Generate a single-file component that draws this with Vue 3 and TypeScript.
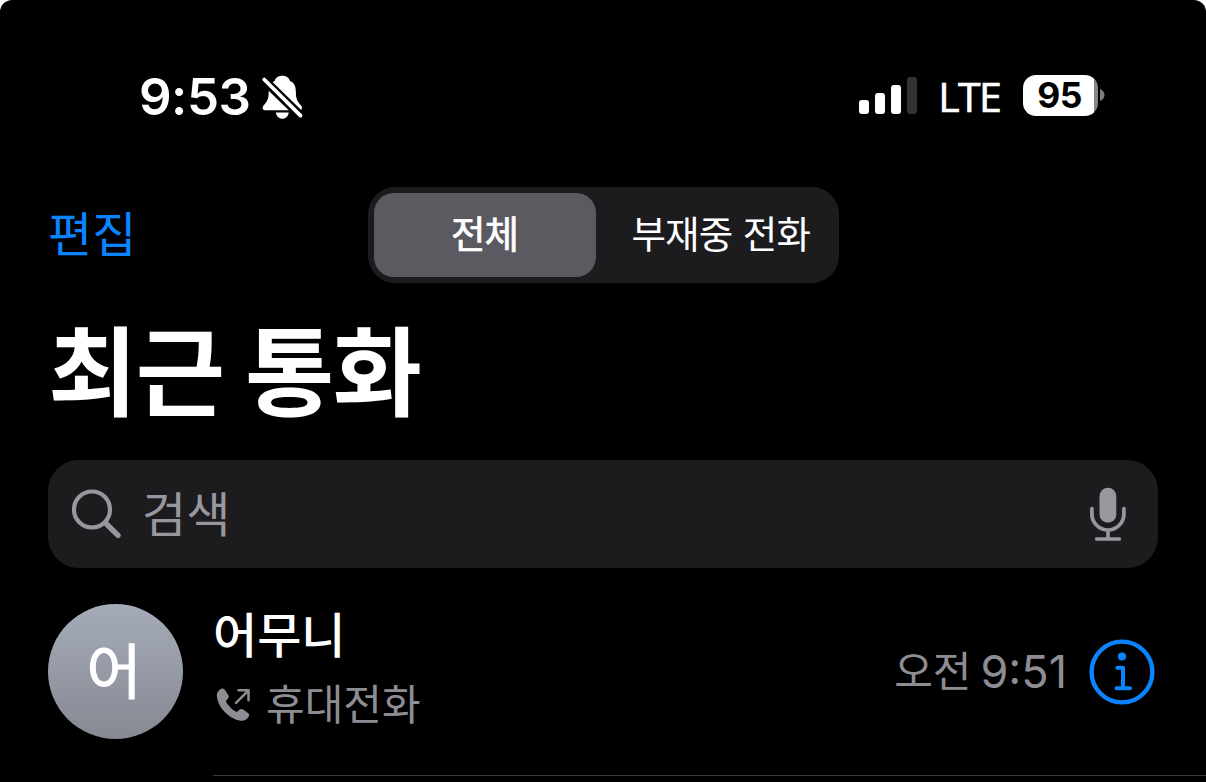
<script setup lang="ts">
import { ref } from 'vue'

interface Call {
  id: number
  name: string
  initial: string
  label: string
  period: string
  time: string
}

const tabs = ['전체', '부재중 전화']
const activeTab = ref(0)
const query = ref('')

const bars = [
  { level: 1, on: true },
  { level: 2, on: true },
  { level: 3, on: true },
  { level: 4, on: false },
]

const calls: Call[] = [
  { id: 1, name: '어무니', initial: '어', label: '휴대전화', period: '오전', time: '9:51' },
]
</script>

<template>
  <div class="screen">
    <header class="status-bar">
      <div class="status-left">
        <span class="clock">9:53</span>
        <svg class="bell" viewBox="0 0 44 46">
          <path d="M22.300 1.700c-4.200 0-6.800 2.200-7.600 5.200C9.800 8.700 8.700 13.200 8.700 18.700c0 7.300-2.300 9.300-5 12.600-1.900 2.500-1.300 5 1.800 5h33.600c3.100 0 3.700-2.500 1.800-5-2.700-3.300-5-5.300-5-12.600 0-5.500-1.100-10-6-11.800C29.100 3.900 26.500 1.700 22.300 1.700z" fill="#fff" />
          <path d="M15.800 38.500h13c-.6 3.800-3.200 6.300-6.500 6.300s-5.900-2.500-6.500-6.300z" fill="#fff" />
          <path d="M0 2 44 45" stroke="#000" stroke-width="8.800" />
          <path d="M4.200 5.500 40.500 41.600" stroke="#fff" stroke-width="3.800" stroke-linecap="round" />
        </svg>
      </div>
      <div class="status-right">
        <div class="signal">
          <i v-for="b in bars" :key="b.level" :class="['bar', 'bar-' + b.level, { off: !b.on }]"></i>
        </div>
        <span class="network">LTE</span>
        <div class="battery">
          <div class="battery-body"><span>95</span></div>
          <svg class="battery-cap" viewBox="0 0 5 14"><path d="M0 1C6 3 6 11 0 13z" fill="#7d7d7d" /></svg>
        </div>
      </div>
    </header>

    <nav class="nav-bar">
      <button class="edit">편집</button>
      <div class="segmented">
        <button
          v-for="(tab, i) in tabs"
          :key="tab"
          :class="['segment', { active: i === activeTab }]"
          @click="activeTab = i"
        >{{ tab }}</button>
      </div>
    </nav>

    <h1 class="title">최근 통화</h1>

    <label class="search">
      <svg class="search-icon" viewBox="0 0 50 50" fill="none" stroke="#98979f" stroke-linecap="round">
        <circle cx="20" cy="20.500" r="18" stroke-width="4.200" />
        <path d="M33.500 34 46 46.300" stroke-width="5.400" />
      </svg>
      <input v-model="query" type="text" placeholder="검색" />
      <svg class="mic-icon" viewBox="0 0 36 54" fill="none" stroke="#98979f" stroke-linecap="round">
        <rect x="9.500" y="0.800" width="16.800" height="35" rx="8.400" fill="#98979f" stroke="none" />
        <path d="M1.900 21.500v5.500a16 16 0 0 0 32 0v-5.500M18 43.500v8M6.700 52h22.600" stroke-width="3.700" />
      </svg>
    </label>

    <ul class="calls">
      <li v-for="call in calls" :key="call.id" class="call">
        <div class="avatar">{{ call.initial }}</div>
        <div class="call-body">
          <div class="call-info">
            <div class="name">{{ call.name }}</div>
            <div class="kind">
              <svg class="outgoing" viewBox="0 0 34 34">
                <path d="M5.400.8C2.500 2.200.6 4.600.9 8.600 1.900 19.500 13.500 31.500 24.500 32.700c4 .4 7-1.500 8.400-4.400.6-1.300.2-2.500-1-3.400l-4.700-3.300c-1.500-1-2.800-.9-4.100.3l-1.700 1.500c-.6.500-1.200.5-1.900.1-3-1.800-7.400-6.200-9.200-9.300-.4-.7-.4-1.200.1-1.800l1.500-1.700c1.100-1.300 1.200-2.600.2-4L8.800 1.800C7.900.6 6.700.2 5.400.8z" fill="#8e8d94" />
                <path d="M20 14.800 32 2.800M22.500 2.200h10v10" fill="none" stroke="#8e8d94" stroke-width="2.500" stroke-linecap="round" stroke-linejoin="round" />
              </svg>
              <span>{{ call.label }}</span>
            </div>
          </div>
          <div class="when">
            <span class="period">{{ call.period }}</span>
            <span class="time">{{ call.time }}</span>
          </div>
          <svg class="info" viewBox="0 0 66 66" fill="none" stroke="#0a84ff" stroke-linecap="round" stroke-linejoin="round">
            <circle cx="33" cy="33" r="30.400" stroke-width="4.400" />
            <circle cx="33" cy="17.500" r="4.100" fill="#0a84ff" stroke="none" />
            <path d="M28.300 28.800h5.700v20M27.500 49.300h13.500" stroke-width="4" />
          </svg>
        </div>
      </li>
    </ul>
  </div>
</template>

<style>
body {
  background: #fff;
}
</style>

<style scoped>
.screen {
  width: 1206px;
  height: 782px;
  box-sizing: border-box;
  overflow: hidden;
  background: #000;
  border-radius: 12px 12px 0 0;
  color: #fff;
  font-family: Inter, "Noto Sans CJK KR", sans-serif;
}

button {
  padding: 0;
  border: 0;
  background: none;
  color: inherit;
  font-family: "Noto Sans CJK KR", sans-serif;
  cursor: pointer;
}

.status-bar {
  display: flex;
  justify-content: space-between;
  height: 187px;
  box-sizing: border-box;
  padding: 65px 101px 62px 139px;
}
.status-left, .status-right { display: flex; align-items: center; }
.clock { padding-top: 3px; font-size: 51px; font-weight: 600; line-height: 60px; letter-spacing: -0.5px; }
.bell { width: 44px; height: 46px; margin: 3px 0 0 10px; }

.signal { display: flex; align-items: flex-end; gap: 6px; height: 37px; }
.bar { width: 10px; border-radius: 3px; background: #fff; }
.bar-1 { height: 14px; }
.bar-2 { height: 21px; }
.bar-3 { height: 29px; }
.bar-4 { height: 37px; }
.bar.off { background: #333; }
.network {
  margin-left: 21px;
  padding-top: 2px;
  font-family: "Open Sans", "Noto Sans", sans-serif;
  font-size: 41px; font-weight: 500; line-height: 60px; letter-spacing: -1.7px;
  -webkit-text-stroke: 0.7px #fff;
}
.battery { display: flex; align-items: center; margin-left: 23px; }
.battery-body {
  display: flex; align-items: center; justify-content: center;
  width: 75px; height: 41px; box-sizing: border-box; padding: 1px 2px 0 0;
  border-radius: 13px;
  background: linear-gradient(90deg, #fff 71px, #858585 71px);
  color: #000; font-size: 35.5px; font-weight: 700; letter-spacing: -0.5px;
}
.battery-cap { width: 5px; height: 14px; margin-left: 2px; }

.nav-bar {
  display: grid;
  grid-template-columns: 1fr 471px 1fr;
  align-items: center;
  height: 96px;
  padding: 0 47px 0 48px;
}
.edit {
  justify-self: start;
  padding-bottom: 8px;
  color: #0a84ff;
  font-size: 48px;
  line-height: 60px;
}
.segmented {
  display: grid;
  grid-template-columns: 222px 1fr;
  height: 96px;
  box-sizing: border-box;
  margin-left: -0.5px;
  padding: 6px;
  border-radius: 27px;
  background: #1c1c1f;
}
.segment {
  padding: 0 0 7px 13px;
  border-radius: 20px;
  font-size: 37.5px;
  letter-spacing: -0.9px;
  word-spacing: 3px;
}
.segment.active {
  padding-left: 0;
  background: #5b5a60;
  -webkit-text-stroke: 0.7px #fff;
}

.title {
  margin: 0;
  height: 177px;
  padding-left: 48px;
  font-family: "Noto Sans CJK KR", sans-serif;
  font-size: 97px;
  font-weight: 700;
  line-height: 166px;
  letter-spacing: -1.5px;
  word-spacing: 1px;
}

.search {
  display: flex;
  align-items: center;
  height: 108px;
  box-sizing: border-box;
  margin: 0 48px;
  padding: 0 32px 0 24px;
  border-radius: 31px;
  background: #1c1c1e;
}
.search-icon { width: 50px; height: 50px; }
.search input {
  flex: 1;
  min-width: 0;
  margin-left: 20px;
  padding: 0 0 6px;
  border: 0;
  outline: none;
  background: none;
  color: #fff;
  font-family: "Noto Sans CJK KR", sans-serif;
  font-size: 48px;
}
.search input::placeholder { color: #98979f; opacity: 1; }
.mic-icon { width: 36px; height: 54px; }

.calls { margin: 0; padding: 0; list-style: none; }
.call { display: flex; padding-left: 48px; }
.avatar {
  flex: none;
  width: 135px;
  height: 135px;
  margin-top: 36px;
  border-radius: 50%;
  background: linear-gradient(#a5abb9, #858992);
  font-family: "Noto Sans CJK KR", sans-serif;
  font-size: 60px;
  line-height: 127px;
  text-align: center;
  text-indent: -3px;
  -webkit-text-stroke: 1px #fff;
}
.call-body {
  flex: 1;
  display: flex;
  align-items: center;
  height: 208px;
  box-sizing: border-box;
  margin-left: 30px;
  padding-right: 51px;
  border-bottom: 1px solid #38383a;
}
.call-info { flex: 1; padding-bottom: 9px; font-family: "Noto Sans CJK KR", sans-serif; }
.name { font-size: 48px; font-weight: 500; line-height: 70px; }
.kind {
  display: flex; align-items: center; gap: 16px;
  padding-left: 3px;
  color: #8e8d94; font-size: 42px; line-height: 70px;
}
.outgoing { width: 34px; height: 34px; margin-top: 6px; }
.when { display: flex; align-items: center; gap: 9px; color: #8e8d94; line-height: 60px; }
.period { font-size: 42px; }
.time { padding-top: 1px; font-size: 45px; }
.info { width: 66px; height: 66px; margin-left: 22px; }
</style>
